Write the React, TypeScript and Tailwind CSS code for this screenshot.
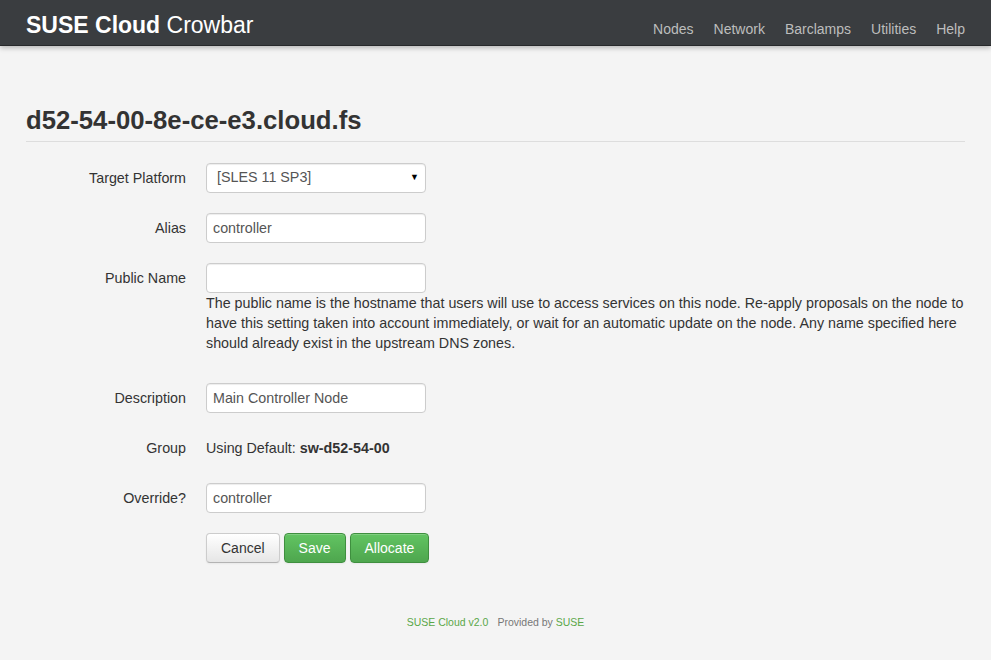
export default function App() {
  const label = "w-[180px] shrink-0 pr-5 pt-[5px] text-right leading-5 text-[#333]";
  const input =
    "h-[30px] w-[220px] rounded-[4px] border border-[#ccc] bg-white px-[6px] text-[14.3px] text-[#555] shadow-[inset_0_1px_1px_rgba(0,0,0,0.075)] outline-none";
  const green =
    "h-[30px] rounded-[4px] border border-[#3f8f3f] bg-gradient-to-b from-[#62c462] to-[#4ea64e] px-[14px] text-[14px] text-white shadow-[inset_0_1px_0_rgba(255,255,255,0.2),0_1px_2px_rgba(0,0,0,0.05)]";

  return (
    <div className="min-h-[660px] bg-[#f4f4f4] text-[14.3px] text-[#333] [font-family:'Liberation_Sans',Arial,sans-serif]">
      {/* navbar */}
      <div className="h-[46px] border-b border-[#27292b] bg-[#3a3d40] shadow-[0_2px_5px_rgba(0,0,0,0.25)]">
        <div className="flex h-full items-center justify-between pl-[26px] pr-[26px]">
          <a href="#" className="pt-[5px] text-[23px] leading-none text-white">
            <span className="font-bold">SUSE Cloud</span> Crowbar
          </a>
          <nav className="flex gap-5 pt-[14px] text-[14px] text-[#bdbdbd]">
            <a href="#">Nodes</a>
            <a href="#">Network</a>
            <a href="#">Barclamps</a>
            <a href="#">Utilities</a>
            <a href="#">Help</a>
          </nav>
        </div>
      </div>

      <div className="px-[26px]">
        <h1 className="mt-[54px] border-b border-[#ddd] pb-[1px] text-[25.7px] font-bold leading-[40px] text-[#333]">
          d52-54-00-8e-ce-e3.cloud.fs
        </h1>

        <form className="mt-[21px]">
          <div className="mb-5 flex items-start">
            <label className={label}>Target Platform</label>
            <div className="relative">
              <select className={input + " appearance-none pl-[10px]"} defaultValue="sles">
                <option value="sles">[SLES 11 SP3]</option>
              </select>
              <span className="pointer-events-none absolute right-[7px] top-[8px] text-[9px] text-black">▼</span>
            </div>
          </div>

          <div className="mb-5 flex items-start">
            <label className={label}>Alias</label>
            <input className={input} defaultValue="controller" />
          </div>

          <div className="mb-5 flex items-start">
            <label className={label}>Public Name</label>
            <div className="flex-1">
              <input className={input} defaultValue="" />
              <p className="mb-[10px] leading-5 text-[#333]">
                The public name is the hostname that users will use to access services on this node. Re-apply proposals on the node to
                have this setting taken into account immediately, or wait for an automatic update on the node. Any name specified here
                should already exist in the upstream DNS zones.
              </p>
            </div>
          </div>

          <div className="mb-5 flex items-start">
            <label className={label}>Description</label>
            <input className={input} defaultValue="Main Controller Node" />
          </div>

          <div className="mb-5 flex h-[30px] items-start">
            <label className={label}>Group</label>
            <div className="pt-[5px] leading-5">
              Using Default: <strong>sw-d52-54-00</strong>
            </div>
          </div>

          <div className="mb-5 flex items-start">
            <label className={label}>Override?</label>
            <input className={input} defaultValue="controller" />
          </div>

          <div className="flex gap-1 pl-[180px]">
            <button
              type="button"
              className="h-[30px] rounded-[4px] border border-[#ccc] border-b-[#b3b3b3] bg-gradient-to-b from-white to-[#e6e6e6] px-[14px] text-[14px] text-[#333] shadow-[inset_0_1px_0_rgba(255,255,255,0.2),0_1px_2px_rgba(0,0,0,0.05)]"
            >
              Cancel
            </button>
            <button type="button" className={green}>
              Save
            </button>
            <button type="button" className={green}>
              Allocate
            </button>
          </div>
        </form>

        <footer className="mt-[52px] text-center text-[10.5px] text-[#777]">
          <a href="#" className="text-[#5aa749]">SUSE Cloud v2.0</a>
          <span className="ml-[9px]">Provided by </span>
          <a href="#" className="text-[#5aa749]">SUSE</a>
        </footer>
      </div>
    </div>
  );
}
